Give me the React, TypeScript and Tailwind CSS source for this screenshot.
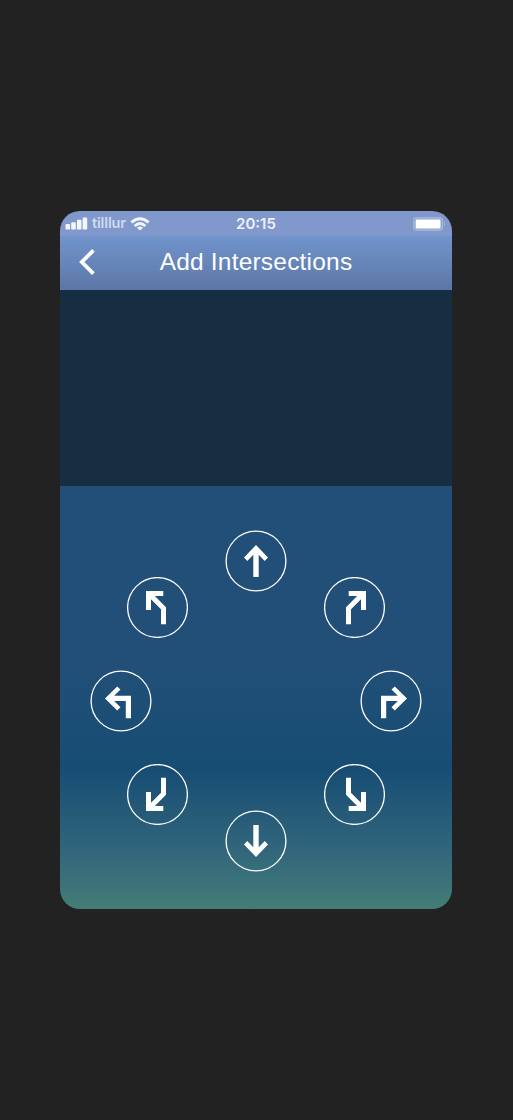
type Turn = { label: string; points: string };

const STRAIGHT = "0,-16 12,-3.5 8.7,0 2.7,-6.2 2.7,16 -2.7,16 -2.7,-6.2 -8.7,0 -12,-3.5";
const DOWN = "0,16 12,3.5 8.7,0 2.7,6.2 2.7,-16 -2.7,-16 -2.7,6.2 -8.7,0 -12,3.5";
const SLIGHT_LEFT =
  "-11.5,-16.5 5.8,-16.5 5.8,-11.5 -2.7,-11.5 8.5,-0.3 8.5,16.7 3.5,16.7 3.5,1.8 -6.5,-8.2 -6.5,2.5 -11.5,2.5";
const SLIGHT_RIGHT =
  "11.5,-16.5 -5.8,-16.5 -5.8,-11.5 2.7,-11.5 -8.5,-0.3 -8.5,16.7 -3.5,16.7 -3.5,1.8 6.5,-8.2 6.5,2.5 11.5,2.5";
const SHARP_LEFT =
  "-11.5,16.5 5.8,16.5 5.8,11.5 -2.7,11.5 8.5,0.3 8.5,-16.7 3.5,-16.7 3.5,-1.8 -6.5,8.2 -6.5,-2.5 -11.5,-2.5";
const SHARP_RIGHT =
  "11.5,16.5 -5.8,16.5 -5.8,11.5 2.7,11.5 -8.5,0.3 -8.5,-16.7 -3.5,-16.7 -3.5,-1.8 6.5,8.2 6.5,-2.5 11.5,-2.5";
const LEFT =
  "-16,-2.6 -3.8,-14.6 -0.5,-11.5 -6.8,-5.2 10,-5.2 10,17.3 4.8,17.3 4.8,0 -6.8,0 -0.5,6.3 -3.8,9.5";
const RIGHT =
  "16,-2.6 3.8,-14.6 0.5,-11.5 6.8,-5.2 -10,-5.2 -10,17.3 -4.8,17.3 -4.8,0 6.8,0 0.5,6.3 3.8,9.5";

const ROWS: { className: string; box: 61 | 62; turns: Turn[] }[] = [
  { className: "", box: 62, turns: [{ label: "Straight", points: STRAIGHT }] },
  {
    className: "-mt-[15px] gap-[136px]",
    box: 61,
    turns: [
      { label: "Slight left", points: SLIGHT_LEFT },
      { label: "Slight right", points: SLIGHT_RIGHT },
    ],
  },
  {
    className: "mt-8 gap-[208px]",
    box: 62,
    turns: [
      { label: "Left", points: LEFT },
      { label: "Right", points: RIGHT },
    ],
  },
  {
    className: "mt-8 gap-[136px]",
    box: 61,
    turns: [
      { label: "Sharp left", points: SHARP_LEFT },
      { label: "Sharp right", points: SHARP_RIGHT },
    ],
  },
  { className: "-mt-[15px]", box: 62, turns: [{ label: "Back", points: DOWN }] },
];

function TurnButton({ label, points, box }: Turn & { box: 61 | 62 }) {
  return (
    <button aria-label={label} className={`block shrink-0 rounded-full ${box === 62 ? "size-[62px]" : "size-[61px]"}`}>
      <svg viewBox={`${-box / 2} ${-box / 2} ${box} ${box}`} className="block size-full">
        <circle r="29.9" fill="none" stroke="#fff" strokeWidth="1.3" />
        <polygon points={points} fill="#fff" />
      </svg>
    </button>
  );
}

function StatusBar() {
  return (
    <div className="grid h-[25px] grid-cols-3 items-center bg-[#8098cb] text-[15px] leading-none text-[#edf1fa]">
      <div className="flex items-center pl-[5px]">
        <svg viewBox="0 0 23 13" className="h-[13px] w-[23px]" fill="#f2f5fc">
          <rect x="0.5" y="7" width="4.6" height="5.6" rx="1.2" />
          <rect x="6.2" y="5.2" width="4.6" height="7.4" rx="1.2" />
          <rect x="11.9" y="2.8" width="4.6" height="9.8" rx="1.2" />
          <rect x="17.6" y="0.4" width="4.6" height="12.2" rx="1.2" />
        </svg>
        <span className="ml-[4px] w-[34px] font-['Inter',sans-serif] text-[14.5px] font-semibold tracking-[-0.15px] whitespace-nowrap text-[#d0daef]">
          tilllur
        </span>
        <svg viewBox="0 0 20 14" className="ml-[4px] h-[14px] w-5" fill="none" stroke="#f2f5fc" strokeWidth="2.9">
          <path d="M1.4 5.5 Q10 -1.8 18.6 5.5" />
          <path d="M4.7 9 Q10 4.2 15.3 9" />
          <path d="M10 13.5 L6.9 10.8 Q10 8.2 13.1 10.8 Z" fill="#f2f5fc" stroke="none" />
        </svg>
      </div>
      <div className="pb-px text-center font-['Inter',sans-serif] font-semibold">20:15</div>
      <div className="flex justify-end pr-[6px]">
        <svg viewBox="0 0 33 14" className="h-[14px] w-[33px]">
          <rect x="0.7" y="0.7" width="28.8" height="12.6" rx="3" fill="#8ea4d1" stroke="#a3b5db" strokeWidth="1.4" />
          <rect x="2.7" y="2.5" width="24.8" height="9" rx="1.3" fill="#fff" />
          <path d="M31 5 Q33 7 31 9 Z" fill="#a3b5db" />
        </svg>
      </div>
    </div>
  );
}

export default function App() {
  return (
    <main className="flex h-[1120px] w-full justify-center bg-[#222222] pt-[211px] pr-px">
      <section className="flex h-[698px] w-[392px] flex-col overflow-hidden rounded-[20px]">
        <StatusBar />
        <header className="grid h-[54px] grid-cols-[54px_1fr_54px] items-center bg-linear-to-b from-[#7194cd] to-[#5c77a6] pb-[2px]">
          <button aria-label="Back" className="pl-[19px]">
            <svg viewBox="0 0 17 26" className="block h-[26px] w-[17px]" fill="none" stroke="#fff" strokeWidth="3.8">
              <path d="M14.4 1.4 L2.8 13 L14.4 24.6" />
            </svg>
          </button>
          <h1 className="text-center font-['Liberation_Sans',sans-serif] text-[24.5px] leading-none tracking-[0.2px] whitespace-nowrap text-white">
            Add Intersections
          </h1>
        </header>
        <div className="h-[196px] bg-[#172d42]" />
        <div className="flex flex-1 flex-col bg-linear-[180deg,#214f78_0%,#214f78_43%,#174d73_67%,#33677c_87%,#447d75_100%] pt-11">
          {ROWS.map((row, i) => (
            <div key={i} className={`flex justify-center ${row.className}`}>
              {row.turns.map((turn) => (
                <TurnButton key={turn.label} box={row.box} {...turn} />
              ))}
            </div>
          ))}
        </div>
      </section>
    </main>
  );
}
